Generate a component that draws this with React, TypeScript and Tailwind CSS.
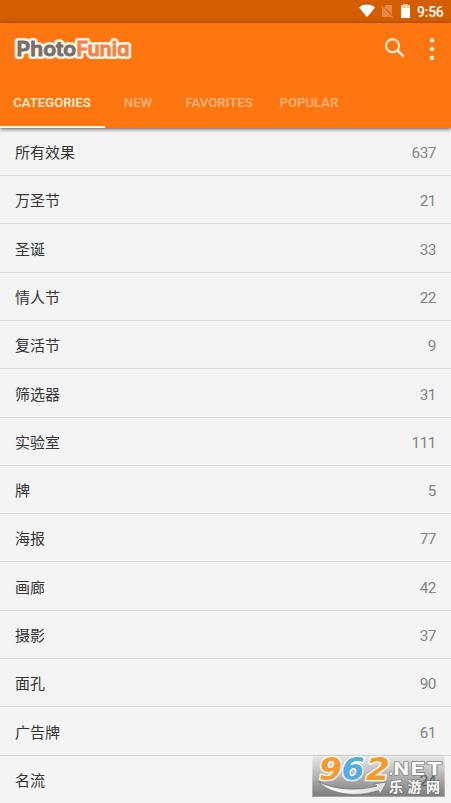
const categories: [string, number][] = [
  ['所有效果', 637],
  ['万圣节', 21],
  ['圣诞', 33],
  ['情人节', 22],
  ['复活节', 9],
  ['筛选器', 31],
  ['实验室', 111],
  ['牌', 5],
  ['海报', 77],
  ['画廊', 42],
  ['摄影', 37],
  ['面孔', 90],
  ['广告牌', 61],
  ['名流', 24],
];

function StatusBar() {
  return (
    <div className="flex h-[23px] shrink-0 items-center justify-end bg-[#d45d00] pr-[7px] text-white">
      <svg className="mr-[6px] mb-[2px]" width="16" height="14" viewBox="0 0 16 14">
        <path d="M0 3.4C4.6-.4 11.4-.4 16 3.4L8 13.3Z" fill="#fff" />
      </svg>
      <svg className="mr-[8px] mb-[1px]" width="12" height="14" viewBox="0 0 12 14">
        <path d="M5 1H11V13H1V5Z" fill="#e28a4c" />
        <path d="M0 1.2L12 13.5" stroke="#d45d00" strokeWidth="2" />
        <path d="M0 2L11.5 13.6" stroke="#e59255" strokeWidth="1.1" />
      </svg>
      <svg className="mr-[7px] mb-[1px]" width="9" height="14" viewBox="0 0 9 14">
        <path d="M0 1.6H2.5V0H6.5V1.6H9V14H0Z" fill="#fff" />
        <path d="M0 1.6H2.5V0H6.5V1.6H9V4H0Z" fill="#f3cdb2" />
      </svg>
      <span className="w-[27px] pt-px whitespace-nowrap text-[14px] leading-[22px] font-medium tracking-[-0.25px]">9:56</span>
    </div>
  );
}

function Logo() {
  return (
    <svg width="124" height="32" viewBox="0 0 124 32" fontFamily="Inter, sans-serif" fontWeight="600" fontSize="19.5" strokeLinejoin="round" style={{ fontFeatureSettings: '"cv11"' }}>
      <g fill="#fff4e4" stroke="#fff4e4" strokeWidth="6">
        <text x="4.6" y="23.4" textLength="59.5" lengthAdjust="spacingAndGlyphs">Photo</text>
        <text x="64.4" y="23.4" textLength="53" lengthAdjust="spacingAndGlyphs">Funia</text>
      </g>
      <g strokeWidth="0.9">
        <text x="4.6" y="23.4" textLength="59.5" lengthAdjust="spacingAndGlyphs" fill="#74706e" stroke="#74706e">Photo</text>
        <text x="64.4" y="23.4" textLength="53" lengthAdjust="spacingAndGlyphs" fill="#f1844c" stroke="#f1844c">Funia</text>
      </g>
    </svg>
  );
}

function Toolbar() {
  return (
    <div className="flex h-[52px] items-center pr-[16px] pl-[12px]">
      <Logo />
      <svg className="mb-[2px] ml-auto" width="20" height="20" viewBox="0 0 20 20" fill="none" stroke="#fff2df">
        <circle cx="7.5" cy="7.7" r="6.5" strokeWidth="1.9" />
        <path d="M12.1 12.2L18.7 18.7" strokeWidth="2.4" />
      </svg>
      <svg className="ml-[24px]" width="6" height="22" viewBox="0 0 6 22" fill="#fff2df">
        <circle cx="3" cy="2.2" r="2.2" />
        <circle cx="3" cy="11" r="2.2" />
        <circle cx="3" cy="19.8" r="2.2" />
      </svg>
    </div>
  );
}

function Tabs() {
  return (
    <div className="flex h-[53px] text-[13.2px] font-medium text-[#ffb781]">
      <div className="flex w-[105px] items-center justify-center border-b-2 border-[#fffaf0] pt-[4px] pr-px text-[#fff3df]">CATEGORIES</div>
      <div className="flex w-[66px] items-center justify-center border-b-2 border-transparent pt-[4px]">NEW</div>
      <div className="flex w-[96px] items-center justify-center border-b-2 border-transparent pt-[4px]">FAVORITES</div>
      <div className="flex w-[84px] items-center justify-center border-b-2 border-transparent pt-[4px]">POPULAR</div>
    </div>
  );
}

const digits = [
  { char: '9', x: 7, width: 23, color: '#f59a2e' },
  { char: '6', x: 29.5, width: 23, color: '#54aee0' },
  { char: '2', x: 54, width: 24, color: '#f59a2e' },
];

const netLetters = [
  { char: '.', x: 76.5, width: 5 },
  { char: 'N', x: 81.5, width: 15.5 },
  { char: 'E', x: 98.5, width: 14 },
  { char: 'T', x: 115, width: 15 },
];

function Watermark() {
  return (
    <svg className="absolute top-[743px] left-[312px]" width="139" height="60" viewBox="0 -10 139 60">
      <defs>
        <linearGradient id="plate" x1="0" y1="0" x2="0" y2="1">
          <stop offset="0" stopColor="#000" stopOpacity=".03" />
          <stop offset=".5" stopColor="#000" stopOpacity=".26" />
          <stop offset="1" stopColor="#000" stopOpacity=".5" />
        </linearGradient>
        <linearGradient id="swoosh" x1="0" y1="0" x2="1" y2="0">
          <stop offset="0" stopColor="#fff" />
          <stop offset="1" stopColor="#dcdcdc" />
        </linearGradient>
      </defs>
      <rect y="1" width="133" height="43" fill="url(#plate)" />
      <rect x=".5" y=".5" width="132" height="43" fill="none" stroke="#fff" strokeOpacity=".3" />
      <g fontFamily="'DejaVu Sans', sans-serif" fontWeight="700" fontStyle="italic" fontSize="32" strokeLinejoin="round">
        {digits.map((d) => (
          <text key={d.char} x={d.x} y="27.3" textLength={d.width} lengthAdjust="spacingAndGlyphs" fill={d.color} stroke="#fff" strokeWidth="2.6" paintOrder="stroke">
            {d.char}
          </text>
        ))}
      </g>
      <path d="M6.5 28.5C20 36.5 45 38.500 65 33L61.500 31L75 29L68 41L66.500 37.500C44 45 18 41.500 6.500 28.500Z" fill="url(#swoosh)" stroke="#777" strokeWidth=".8" />
      <g fontFamily="Roboto, sans-serif" fontWeight="700" fontSize="18" fill="#fff" stroke="#858585" strokeWidth="1.6" strokeLinejoin="round">
        {netLetters.map((l) => (
          <text key={l.char} x={l.x} y="21.5" textLength={l.width} lengthAdjust="spacingAndGlyphs" paintOrder="stroke">
            {l.char}
          </text>
        ))}
      </g>
      <text x="77" y="39" textLength="51" fontFamily="'Noto Sans CJK SC', sans-serif" fontWeight="700" fontSize="14" fill="#fff" stroke="#777" strokeWidth="1.4" paintOrder="stroke">乐游网</text>
    </svg>
  );
}

export default function App() {
  return (
    <div className="relative flex h-[803px] w-[451px] flex-col overflow-hidden bg-[#f4f4f4] font-[Roboto,'Noto_Sans_CJK_SC',sans-serif]">
      <StatusBar />
      <header className="z-10 shrink-0 bg-[#ff7611] shadow-[0_1px_4px_rgba(0,0,0,0.65)]">
        <Toolbar />
        <Tabs />
      </header>
      <main className="-mt-[0.2px] flex flex-col">
        {categories.map(([name, count]) => (
          <div key={name} className="flex h-[48.3px] shrink-0 items-center justify-between border-b border-[#d9d9d9] px-[15px] pt-[3.2px]">
            <span className="text-[15px] leading-[22px] text-[#353535]">{name}</span>
            <span className="text-[15.4px] leading-[22px] tracking-[-0.5px] text-[#858585]">{count}</span>
          </div>
        ))}
      </main>
      <Watermark />
    </div>
  );
}
